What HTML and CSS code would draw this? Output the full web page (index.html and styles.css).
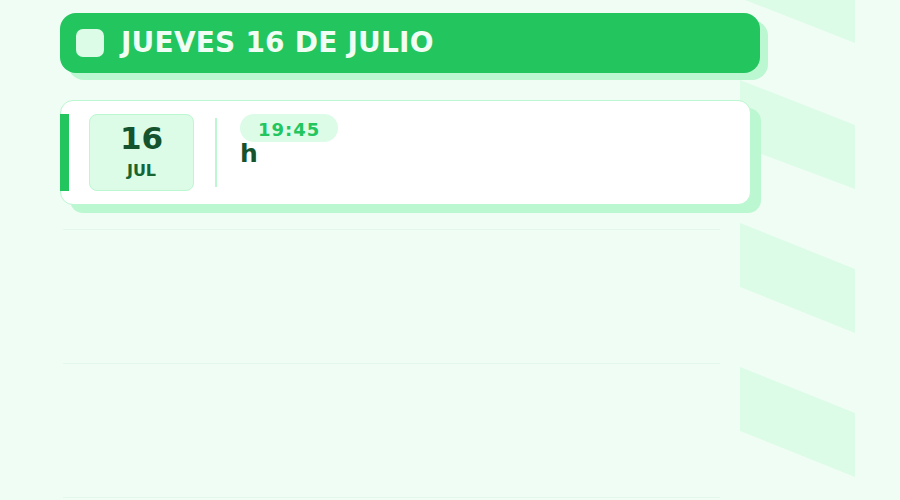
FILE: index.html
```html
<!DOCTYPE html>
<html lang="es">
<head>
    <meta charset="UTF-8">
    <title>Agenda</title>
    <link rel="stylesheet" href="styles.css">
</head>
<body>
<div class="page">
    <svg class="page__stripes" width="115" height="500" viewBox="0 0 115 500">
        <polygon points="0,-66 115,-21 115,43 0,-2"/>
        <polygon points="0,80 115,125 115,189 0,146"/>
        <polygon points="0,223 115,269 115,333 0,287"/>
        <polygon points="0,367 115,413 115,477 0,431"/>
    </svg>

    <div class="agenda">
        <div class="day__header">
            <span class="day__icon"></span>
            <span class="day__title">JUEVES 16 DE JULIO</span>
        </div>

        <div class="event">
            <div class="event__accent"></div>
            <div class="event__date">
                <span class="event__day">16</span>
                <span class="event__month">JUL</span>
            </div>
            <div class="event__divider"></div>
            <div class="event__body">
                <span class="event__time">19:45</span>
                <span class="event__name">h</span>
            </div>
        </div>

        <div class="slots">
            <div class="slot"></div>
            <div class="slot"></div>
            <div class="slot"></div>
        </div>
    </div>
</div>
</body>
</html>
```

FILE: styles.css
```css
body {
    margin: 0;
    background: #f0fdf4;
    font-family: "DejaVu Sans", "Noto Sans", sans-serif;
}

.page {
    position: relative;
    width: 900px;
    height: 500px;
    overflow: hidden;
}

/* diagonal bands down the right edge */
.page__stripes {
    position: absolute;
    left: 740px;
    top: 0;
}

.page__stripes polygon {
    fill: #dcfce7;
}

.agenda {
    position: relative;
    width: 700px;
    padding: 13px 0 0 60px;
}

.day__header {
    display: flex;
    align-items: center;
    gap: 16px;
    height: 60px;
    padding: 0 16px;
    background: #22c55e;
    border-radius: 16px;
    box-shadow: 8px 7px 0 #bbf7d0;
}

.day__icon {
    width: 28px;
    height: 28px;
    border-radius: 7px;
    background: #dcfce7;
}

.day__title {
    margin-left: 1px;
    color: #f0fdf4;
    font-size: 28px;
    font-weight: bold;
    line-height: 1;
    letter-spacing: 0.2px;
}

.event {
    display: flex;
    width: 689px;
    margin-top: 27px;
    padding: 13px 0;
    background: #fff;
    border: 1px solid #bbf7d0;
    border-radius: 13px;
    box-shadow: 10px 8px 0 #bbf7d0;
}

.event__accent {
    width: 9px;
    margin-left: -1px;
    background: #22c55e;
}

.event__date {
    display: flex;
    flex-direction: column;
    align-items: center;
    width: 103px;
    height: 75px;
    margin-left: 20px;
    background: #dcfce7;
    border: 1px solid #bbf7d0;
    border-radius: 8px;
    color: #14532d;
    font-weight: bold;
}

.event__day {
    margin-top: 6px;
    font-size: 31px;
    line-height: 34px;
}

.event__month {
    margin-top: 7px;
    font-size: 16px;
    line-height: 18px;
    color: #166534;
}

.event__divider {
    width: 2px;
    margin: 4px 0 4px 21px;
    background: #bbf7d0;
}

.event__body {
    display: flex;
    flex-direction: column;
    align-items: flex-start;
    margin-left: 23px;
}

.event__time {
    padding: 2px 18px 0;
    height: 26px;
    line-height: 28px;
    border-radius: 14px;
    background: #dcfce7;
    color: #22c55e;
    font-size: 18px;
    font-weight: bold;
    letter-spacing: 1px;
}

.event__name {
    margin-top: -1px;
    color: #14532d;
    font-size: 25px;
    font-weight: bold;
    line-height: 26px;
}

.slots {
    width: 657px;
    height: 270px;
    margin: 24px 0 0 3px;
    overflow: hidden;
}

.slot {
    height: 133px;
    border-top: 1px solid #e3f8ea;
}
```
